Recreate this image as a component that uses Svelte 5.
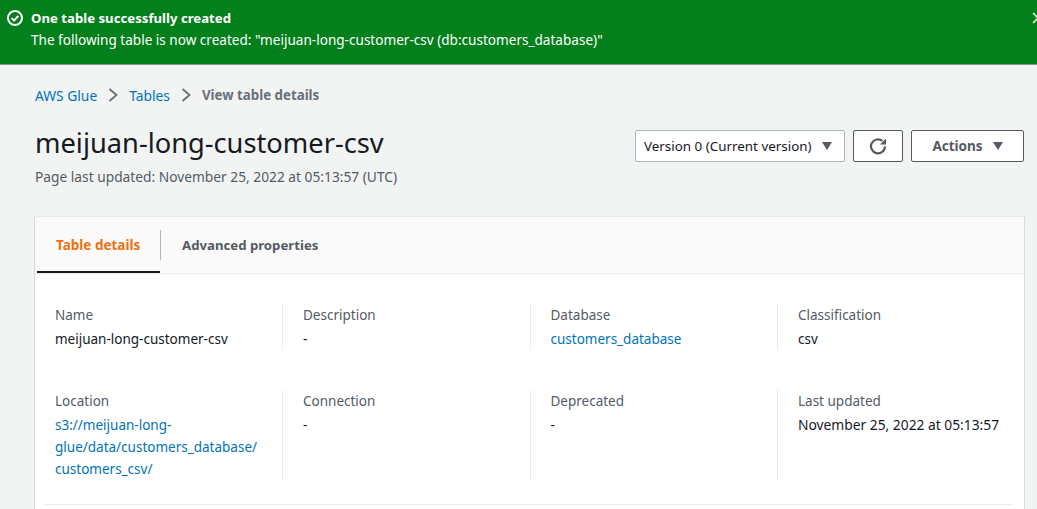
<script>
  const rows = [
    [
      { label: "Name", lines: ["meijuan-long-customer-csv"] },
      { label: "Description", lines: ["-"] },
      { label: "Database", lines: ["customers_database"], link: true },
      { label: "Classification", lines: ["csv"] }
    ],
    [
      { label: "Location", lines: ["s3://meijuan-long-", "glue/data/customers_database/", "customers_csv/"], link: true },
      { label: "Connection", lines: ["-"] },
      { label: "Deprecated", lines: ["-"] },
      { label: "Last updated", lines: ["November 25, 2022 at 05:13:57"], date: true }
    ]
  ];
</script>

<div class="page">
  <div class="flash">
    <svg class="okIcon" width="16" height="16" viewBox="0 0 16 16" fill="none" stroke="#fff" stroke-width="2">
      <circle cx="8" cy="8" r="7"></circle>
      <path d="M4.6 8.1l2.4 2.4 4.4-4.6"></path>
    </svg>
    <div class="flashText">
      <div class="flashTitle">One table successfully created</div>
      <div class="flashBody">The following table is now created: "meijuan-long-customer-csv (db:customers_database)"</div>
    </div>
    <svg class="closeIcon" width="12" height="12" viewBox="0 0 12 12" fill="none" stroke="#dfe9df" stroke-width="1.6">
      <path d="M1 1l10 10M11 1L1 11"></path>
    </svg>
  </div>

  <main>
    <nav class="crumbs">
      <a href="#glue">AWS Glue</a>
      <svg width="12" height="16" viewBox="0 0 12 16" fill="none" stroke="#687078" stroke-width="1.8"><path d="M2.5 2l7 6-7 6"></path></svg>
      <a href="#tables">Tables</a>
      <svg width="12" height="16" viewBox="0 0 12 16" fill="none" stroke="#687078" stroke-width="1.8"><path d="M2.5 2l7 6-7 6"></path></svg>
      <span>View table details</span>
    </nav>

    <div class="header">
      <div>
        <h1>meijuan-long-customer-csv</h1>
        <p class="updated">Page last updated: November 25, 2022 at 05:13:57 (UTC)</p>
      </div>
      <div class="headerBtns">
        <button class="select">Version 0 (Current version) <i class="caret"></i></button>
        <button class="btn refresh" aria-label="Refresh">
          <svg width="18" height="18" viewBox="0 0 18 18" fill="none" stroke="#545b64" stroke-width="2.2">
            <path d="M16 9.5a7 7 0 1 1-2.6-5.6"></path>
            <path d="M17 1.5v6h-6z" fill="#545b64" stroke="none"></path>
          </svg>
        </button>
        <button class="btn actions">Actions <i class="caret"></i></button>
      </div>
    </div>

    <section class="card">
      <div class="tabs">
        <div class="tab active">Table details</div>
        <div class="tabLine"></div>
        <div class="tab second">Advanced properties</div>
      </div>
      <div class="details">
        {#each rows as row}
          <div class="row">
            {#each row as item}
              <div class="cell">
                <div class="label">{item.label}</div>
                <div class="value" class:link={item.link} class:date={item.date}>
                  {#each item.lines as line}
                    <div>{line}</div>
                  {/each}
                </div>
              </div>
            {/each}
          </div>
        {/each}
      </div>
    </section>
  </main>
</div>

<style>
  :global(body) {
    background: #f2f3f3;
    overflow: hidden;
  }

  .page {
    height: 509px;
    overflow: hidden;
    font-family: "Noto Sans", sans-serif;
    font-size: 13.5px;
    color: #16191f;
  }

  .flash {
    display: flex;
    align-items: flex-start;
    height: 65px;
    box-sizing: border-box;
    padding: 7px 0 0 7px;
    background: #037f1c;
    border-bottom: 1px solid #879596;
    color: #fff;
    line-height: 22px;
  }
  .okIcon {
    margin: 3px 8px 0 0;
    flex: none;
  }
  .flashText {
    flex: 1;
  }
  .flashTitle {
    font-weight: 700;
    font-size: 13.2px;
  }
  .flashBody {
    font-size: 13.57px;
  }
  .closeIcon {
    margin: 5px -7px 0 0;
    flex: none;
  }

  main {
    padding: 0 13px 0 35px;
  }

  .crumbs {
    display: flex;
    align-items: center;
    gap: 10px;
    height: 22px;
    margin-top: 19px;
  }
  .crumbs a {
    color: #0073bb;
    text-decoration: none;
    font-size: 13.8px;
  }
  .crumbs span {
    color: #687078;
    font-weight: 700;
    font-size: 13.3px;
  }

  .header {
    display: flex;
    justify-content: space-between;
    margin-top: 19px;
    align-items: flex-start;
  }
  h1 {
    margin: 0;
    font-size: 27.25px;
    font-weight: 400;
    line-height: 36px;
  }
  .updated {
    margin: 6px 0 0;
    line-height: 20px;
    color: #545b64;
    font-size: 13.75px;
  }

  .headerBtns {
    display: flex;
    gap: 8px;
    margin-top: 5px;
  }
  button {
    font: inherit;
    height: 32px;
    box-sizing: border-box;
    background: #fff;
    border-radius: 2px;
    display: flex;
    align-items: center;
    justify-content: center;
    padding: 0;
    color: #16191f;
  }
  .select {
    width: 210px;
    border: 1px solid #aab7b8;
    justify-content: flex-start;
    padding-left: 8px;
    gap: 10px;
    font-size: 13.4px;
  }
  .btn {
    border: 1px solid #545b64;
    color: #545b64;
    font-weight: 700;
  }
  .refresh {
    width: 50px;
  }
  .actions {
    width: 113px;
    gap: 10px;
  }
  .caret {
    width: 0;
    height: 0;
    border-left: 5.5px solid transparent;
    border-right: 5.5px solid transparent;
    border-top: 8px solid #545b64;
  }

  .card {
    margin-top: 30px;
    background: #fff;
    padding-bottom: 20px;
    border-left: 1px solid #d5dbdb;
    border-right: 1px solid #d5dbdb;
    box-shadow: 0 -1px 0 #e9ebed;
    margin-left: -1px;
    margin-right: -1px;
  }

  .tabs {
    display: flex;
    align-items: flex-start;
    height: 57px;
    padding-left: 2px;
    background: #fafafa;
    border-bottom: 1px solid #eaeded;
    box-sizing: border-box;
  }
  .tab {
    padding: 0 19px;
    font-weight: 700;
    color: #545b64;
    line-height: 56px;
    height: 56px;
    box-sizing: border-box;
    white-space: nowrap;
  }
  .tab.second {
    font-size: 13.2px;
  }
  .tab.active {
    width: 123px;
    color: #ec7211;
    border-bottom: 2px solid #16191f;
    padding-right: 0;
  }
  .tabLine {
    width: 1px;
    height: 30px;
    margin: 13px 2px 0 0;
    background: #aab7b8;
  }

  .details {
    margin: 0 11px 0 10px;
    padding: 30px 0 24px;
    border-bottom: 1px solid #eaeded;
  }
  .row {
    display: grid;
    grid-template-columns: 237px repeat(3, 247.5px);
    margin-bottom: 40px;
  }
  .row:last-child {
    margin-bottom: 0;
  }
  .cell {
    padding: 0 0 0 20px;
    border-left: 1px solid #eaeded;
    line-height: 22px;
    min-height: 46px;
  }
  .cell:first-child {
    padding-left: 10px;
    border-left: none;
  }
  .label {
    color: #545b64;
    height: 24px;
  }
  .link {
    color: #0073bb;
  }
  .date {
    font-size: 13.8px;
    white-space: nowrap;
  }
</style>
